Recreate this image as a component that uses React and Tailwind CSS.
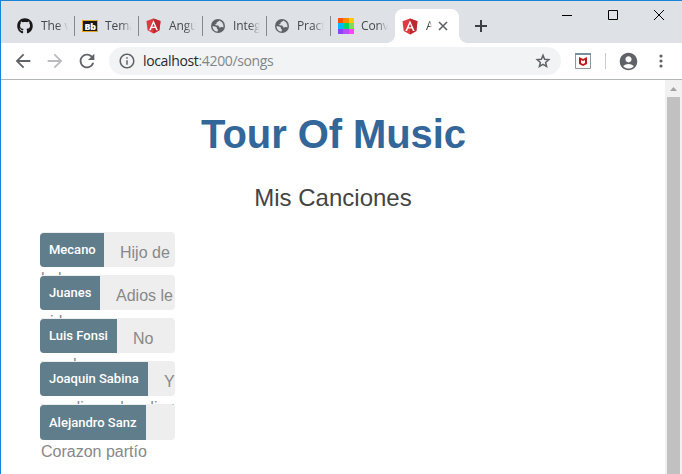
import React from "react";
import { FaGithub } from "react-icons/fa";
import {
  MdArrowBack,
  MdArrowForward,
  MdRefresh,
  MdInfoOutline,
  MdAccountCircle,
} from "react-icons/md";

function AngularIcon({ size = 16 }) {
  return (
    <svg width={size} height={size + 1} viewBox="0 0 250 266">
      <path fill="#dd3b41" d="M125 8 8 50l18 154 99 54 99-54 18-154z" />
      <path fill="#bb2a2f" d="M125 8v250l99-54 18-154z" />
      <path
        fill="#fff"
        d="M125 38 52 202h28l14-36h62l14 36h28zM125 90l22 54h-44z"
      />
    </svg>
  );
}

function GlobeIcon() {
  return (
    <svg width="16" height="16" viewBox="0 0 16 16">
      <circle cx="8" cy="8" r="7" fill="#5f6368" />
      <path
        d="M9.200 2.600c-.3 1-1.200 1-2 1.400-.8.500-.2 1.400-1 1.800-.7.300-1.200.5-.8 1.200.6.600 2.200.2 3 .7.800.500.5 1.500 1.400 1.700 1 .2 1.100-.6 2.200-.5.700.1 1 .3 1.400.5.500-2.800-.9-5.600-4.200-6.800z"
        fill="#dee1e6"
      />
      <path
        d="M2.500 8.200c1.600.2 3.500.1 4.100 1 .5.800 0 1.300.8 1.700.7.400.6 1.200.2 2.600-2.900 0-5-2.300-5.100-5.300z"
        fill="#dee1e6"
      />
    </svg>
  );
}

function BlackboardIcon() {
  return (
    <span className="flex h-4 w-4 items-center">
      <span className="flex h-3 w-4 items-center justify-center border border-[#e0a820] bg-[#1a1a1a] font-['Noto_Sans',sans-serif] text-[9px] leading-none font-black tracking-[-0.5px] text-white">
        Bb
      </span>
    </span>
  );
}

function ColorGridIcon() {
  return (
    <span className="grid h-4 w-4 grid-cols-3 grid-rows-3">
      <span className="bg-[#ff5400]" />
      <span className="bg-[#ff8c00]" />
      <span className="bg-[#ffcb00]" />
      <span className="bg-[#00b8ff]" />
      <span className="bg-[#00d66b]" />
      <span className="bg-[#7fdc52]" />
      <span className="bg-[#8845ff]" />
      <span className="bg-[#b84cff]" />
      <span className="bg-[#ff45f5]" />
    </span>
  );
}

const tabs = [
  { icon: <FaGithub size={16} className="text-[#191717]" />, title: "The w", gap: "ml-[6px] mr-2" },
  { icon: <BlackboardIcon />, title: "Tema", gap: "ml-[7px] mr-[7px]" },
  { icon: <AngularIcon size={15} />, title: "Angul", gap: "ml-[6px] mr-2" },
  { icon: <GlobeIcon />, title: "Integ", gap: "ml-[7px] mr-[7px]" },
  { icon: <GlobeIcon />, title: "Pract", gap: "ml-[7px] mr-[7px]" },
  { icon: <ColorGridIcon />, title: "Conv", gap: "ml-[7px] mr-[7px]" },
];

const songs = [
  { artist: "Mecano", width: "w-[64px]", first: "Hijo de", rest: "la luna" },
  { artist: "Juanes", width: "w-[60px]", first: "Adios le", rest: "pido" },
  { artist: "Luis Fonsi", width: "w-[77px]", first: "No", rest: "me doy" },
  { artist: "Joaquin Sabina", width: "w-[108px]", first: "Y", rest: "nos dieron las diez" },
  { artist: "Alejandro Sanz", width: "w-[106px]", first: "", rest: "Corazon partío", last: true },
];

function TabStrip() {
  return (
    <div className="flex h-[42px] bg-[#dee1e6]">
      <div className="flex pl-[10px]">
        {tabs.map((tab, i) => (
          <div
            key={tab.title}
            className={`flex h-[42px] w-16 items-center pt-2 ${i === 5 ? "" : "bg-[linear-gradient(#85888c,#85888c)] bg-[length:1px_20px] bg-[position:63px_15px] bg-no-repeat"}`}
          >
            <span className={`flex w-4 shrink-0 justify-center ${tab.gap}`}>{tab.icon}</span>
            <span className="w-[27px] overflow-hidden [mask-image:linear-gradient(to_right,#000_60%,transparent)] font-['Open_Sans','Noto_Sans',sans-serif] text-[12px] leading-4 tracking-[-0.1px] whitespace-nowrap text-[#45494d]">
              {tab.title}
            </span>
          </div>
        ))}
      </div>
      <div className="-ml-2 flex pt-2">
        <div className="mt-[26px] h-2 w-2 bg-[radial-gradient(circle_at_0_0,#dee1e6_7.5px,#fff_8px)]" />
        <div className="flex w-[64px] items-center rounded-t-lg bg-white pl-[7px]">
          <AngularIcon />
          <span className="ml-2 w-[6px] overflow-hidden [mask-image:linear-gradient(to_right,#000_50%,transparent)] font-['Open_Sans','Noto_Sans',sans-serif] text-[12px] leading-4 text-[#3c4043]">
            A
          </span>
          <svg width="10" height="10" viewBox="0 0 10 10" className="ml-[6px] text-[#5f6368]">
            <path d="M1 1l8 8M9 1l-8 8" stroke="currentColor" strokeWidth="1.6" />
          </svg>
        </div>
        <div className="mt-[26px] h-2 w-2 bg-[radial-gradient(circle_at_100%_0,#dee1e6_7.5px,#fff_8px)]" />
      </div>
      <svg width="12" height="12" viewBox="0 0 12 12" className="mt-[19px] ml-2 text-[#3c4043]">
        <path d="M6 0v12M0 6h12" stroke="currentColor" strokeWidth="2" />
      </svg>
      <div className="mr-[18px] ml-auto flex gap-9 pt-[9px] text-black">
        <svg width="10" height="10" viewBox="0 0 10 10">
          <path d="M0 5.5h10" stroke="currentColor" />
        </svg>
        <svg width="10" height="10" viewBox="0 0 10 10">
          <path d="M.5.5h9v9h-9z" fill="none" stroke="currentColor" />
        </svg>
        <svg width="10" height="10" viewBox="0 0 10 10">
          <path d="M0 0l10 10M10 0L0 10" stroke="currentColor" />
        </svg>
      </div>
    </div>
  );
}

function Toolbar() {
  return (
    <div className="flex h-[37px] items-center border-b border-[#b4b5b7] bg-white pl-[11px] text-[#5f6368]">
      <MdArrowBack size={22} />
      <MdArrowForward size={22} className="ml-[10px] text-[#b9bbbe]" />
      <MdRefresh size={22} className="ml-[10px]" />
      <div className="ml-[11px] flex h-7 w-[452px] items-center rounded-full bg-[#f1f3f4] pl-[9px]">
        <MdInfoOutline size={18} />
        <span className="ml-[7px] font-['Open_Sans','Noto_Sans',sans-serif] text-[14px] leading-5 tracking-[-0.35px] text-[#27292c]">
          localhost<span className="text-[#80868b]">:4200/songs</span>
        </span>
        <svg
          width="16"
          height="16"
          viewBox="0 0 16 16"
          className="mr-[10px] ml-auto"
          fill="none"
          stroke="currentColor"
          strokeWidth="1.5"
        >
          <path d="M8 2.300l1.600 3.900 4.200.4-3.200 2.800 1 4.100L8 11.300l-3.600 2.200 1-4.100-3.200-2.800 4.200-.4z" />
        </svg>
      </div>
      <svg width="16" height="16" viewBox="0 0 16 16" className="ml-[14px]">
        <path d="M.5.5h15v15H.5z" fill="#fff" stroke="#8c989d" />
        <path d="M0 0h16v2H0z" fill="#78909c" />
        <path d="M4 4l4 2 4-2v7l-4 2-4-2z" fill="#c01818" />
        <path d="M6 7l2 1 2-1v3l-2 1-2-1z" fill="#fff" />
      </svg>
      <div className="ml-[14px] h-4 w-px bg-[#c9cbce]" />
      <MdAccountCircle size={21} className="ml-3" />
      <svg width="4" height="14" viewBox="0 0 4 14" className="ml-5" fill="currentColor">
        <circle cx="2" cy="2" r="1.6" />
        <circle cx="2" cy="7" r="1.6" />
        <circle cx="2" cy="12" r="1.6" />
      </svg>
    </div>
  );
}

function Song({ artist, width, first, rest, last }) {
  const height = last ? "h-9" : "h-[35px]";
  return (
    <li
      className={`relative mb-2 w-[135px] rounded bg-[#eee] text-[16px] whitespace-nowrap text-[#888] ${height}`}
    >
      <div className={`flex pt-px ${height}`}>
        <span
          className={`flex shrink-0 items-center rounded-l bg-[#607d8b] pl-[9px] font-[Roboto,sans-serif] text-[13px] font-medium text-white ${last ? "pt-px" : ""} ${width}`}
        >
          {artist}
        </span>
        <span className="pt-[10px] pl-4 leading-5">{first}</span>
      </div>
      <div className="pt-[3px] pl-px leading-[18px]">{rest}</div>
    </li>
  );
}

export default function App() {
  return (
    <div className="flex h-[474px] w-[682px] flex-col overflow-hidden border-t border-l border-[#1883d7] bg-white">
      <TabStrip />
      <Toolbar />
      <div className="flex min-h-0 flex-1">
        <main className="flex-1 overflow-hidden font-['Liberation_Sans',Arial,sans-serif]">
          <h1 className="mt-[31px] pl-px text-center text-[40px] leading-[46px] font-bold tracking-[-0.08px] text-[#336699]">
            Tour Of Music
          </h1>
          <h2 className="mt-[27px] text-center text-[24px] leading-7 text-[#444]">Mis Canciones</h2>
          <ul className="mt-5 ml-[39px]">
            {songs.map((song) => (
              <Song key={song.artist} {...song} />
            ))}
          </ul>
        </main>
        <div className="flex w-[17px] flex-col items-center bg-[#f1f1f1]">
          <svg width="17" height="17" viewBox="0 0 17 17">
            <path d="M5 11h7L8.500 7z" fill="#a3a3a3" />
          </svg>
          <div className="w-[13px] flex-1 bg-[#c1c1c1]" />
        </div>
      </div>
    </div>
  );
}
